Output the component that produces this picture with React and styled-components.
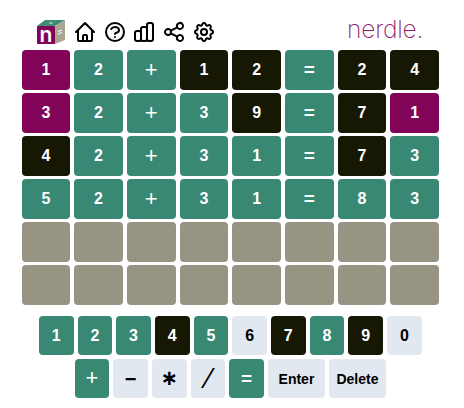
import React from 'react';
import styled, { createGlobalStyle } from 'styled-components';
import {
  HiOutlineHome,
  HiOutlineQuestionMarkCircle,
  HiOutlineChartBar,
  HiOutlineShare,
  HiOutlineCog,
} from 'react-icons/hi';

const colors = {
  purple: '#820458',
  green: '#398874',
  black: '#161803',
  gray: '#989484',
  light: '#e2e8f0',
};

const GlobalStyle = createGlobalStyle`
  html, body {
    margin: 0;
    padding: 0;
    background: #fff;
    font-family: "Liberation Sans", Arial, sans-serif;
  }
`;

const Page = styled.div`
  width: 464px;
  height: 408px;
  overflow: hidden;
  padding: 18px 25px 0 21.5px;
  box-sizing: border-box;
`;

const Header = styled.header`
  display: flex;
  align-items: center;
  justify-content: space-between;
  height: 28px;
  margin-bottom: 4px;
  padding: 0 16px 0 15.5px;
`;

const IconRow = styled.div`
  display: flex;
  align-items: center;
  gap: 4.75px;
`;

const IconButton = styled.button`
  display: flex;
  align-items: center;
  justify-content: center;
  width: 25px;
  height: 28px;
  padding: 0;
  border: 0;
  background: none;
  color: #000;
  font-size: 24px;
`;

const LogoMark = styled.svg`
  margin-right: 1.5px;
`;

const Wordmark = styled.div`
  font-family: Inter, sans-serif;
  font-weight: 200;
  font-size: 24.5px;
  line-height: 28px;
  color: #8f1f6c;
  letter-spacing: -0.2px;
  margin-bottom: 6px;
`;

const Board = styled.div`
  display: grid;
  grid-template-columns: repeat(8, 1fr);
  grid-auto-rows: 40px;
  gap: 3px 4px;
`;

const Cell = styled.div`
  display: flex;
  align-items: center;
  justify-content: center;
  border-radius: 4px;
  background: ${(p) => colors[p.$tone]};
  color: #fff;
  font-weight: 700;
  font-size: 16px;
`;

const Keyboard = styled.div`
  display: flex;
  flex-direction: column;
  align-items: center;
  gap: 4px;
  margin-top: 11px;
`;

const KeyRow = styled.div`
  display: flex;
  gap: 4px;
`;

const Key = styled.button`
  display: flex;
  align-items: center;
  justify-content: center;
  width: ${(p) => (p.$wide ? '57px' : '34.7px')};
  height: 39px;
  padding: 0;
  border: 0;
  border-radius: 4px;
  background: ${(p) => colors[p.$tone]};
  color: ${(p) => (p.$tone === 'light' ? '#000' : '#fff')};
  font-family: inherit;
  font-weight: 700;
  font-size: ${(p) => (p.$wide ? '14px' : '16px')};
`;

const symbolStyles = {
  '+': 'font-size: 22px; font-weight: 400; margin-top: -1px;',
  '=': 'font-size: 19px; font-weight: 700; margin-top: -1px;',
  '−': 'font-size: 20px; font-weight: 700;',
  '∗': 'font-family: "DejaVu Sans", sans-serif; font-size: 21px; font-weight: 700;',
  '⁄': 'font-family: "DejaVu Sans", sans-serif; font-size: 26px; font-weight: 400;',
};

const Symbol = styled.span`
  line-height: 1;
  ${(p) => symbolStyles[p.$char]}
`;

const CubeLogo = () => (
  <LogoMark width="29" height="25" viewBox="0 0 29 25">
    <path d="M0 6L8 0H28L18 6z" fill="#3f8d79" />
    <path d="M18 6L28 0V20L18 24z" fill="#aaa692" />
    <path d="M12 3h4M14 2v2" stroke="#cfe3dc" strokeWidth="0.7" />
    <path d="M21 11.5l4-1.5M21 14l4-1.5" stroke="#fff" strokeWidth="1" />
    <rect x="0" y="6" width="18" height="18" rx="1" fill={colors.purple} />
    <text x="9" y="21.5" textAnchor="middle" fontFamily="Inter, sans-serif" fontWeight="600" fontSize="21" fill="#fff">n</text>
  </LogoMark>
);

const rows = [
  [['1', 'purple'], ['2', 'green'], ['+', 'green'], ['1', 'black'], ['2', 'black'], ['=', 'green'], ['2', 'black'], ['4', 'black']],
  [['3', 'purple'], ['2', 'green'], ['+', 'green'], ['3', 'green'], ['9', 'black'], ['=', 'green'], ['7', 'black'], ['1', 'purple']],
  [['4', 'black'], ['2', 'green'], ['+', 'green'], ['3', 'green'], ['1', 'green'], ['=', 'green'], ['7', 'black'], ['3', 'green']],
  [['5', 'green'], ['2', 'green'], ['+', 'green'], ['3', 'green'], ['1', 'green'], ['=', 'green'], ['8', 'green'], ['3', 'green']],
];

const digits = [
  ['1', 'green'], ['2', 'green'], ['3', 'green'], ['4', 'black'], ['5', 'green'],
  ['6', 'light'], ['7', 'black'], ['8', 'green'], ['9', 'black'], ['0', 'light'],
];

const operators = [
  ['+', 'green'], ['−', 'light'], ['∗', 'light'], ['⁄', 'light'], ['=', 'green'],
];

const App = () => (
  <Page>
    <GlobalStyle />
    <Header>
      <IconRow>
        <CubeLogo />
        <IconButton><HiOutlineHome /></IconButton>
        <IconButton><HiOutlineQuestionMarkCircle /></IconButton>
        <IconButton><HiOutlineChartBar /></IconButton>
        <IconButton><HiOutlineShare /></IconButton>
        <IconButton><HiOutlineCog /></IconButton>
      </IconRow>
      <Wordmark>nerdle.</Wordmark>
    </Header>
    <Board>
      {rows.flat().map(([label, tone], i) => (
        <Cell key={i} $tone={tone}>
          {'+='.includes(label) ? <Symbol $char={label}>{label}</Symbol> : label}
        </Cell>
      ))}
      {Array.from({ length: 16 }).map((_, i) => (
        <Cell key={i} $tone="gray" />
      ))}
    </Board>
    <Keyboard>
      <KeyRow>
        {digits.map(([label, tone]) => (
          <Key key={label} $tone={tone}>{label}</Key>
        ))}
      </KeyRow>
      <KeyRow>
        {operators.map(([label, tone]) => (
          <Key key={label} $tone={tone}><Symbol $char={label}>{label}</Symbol></Key>
        ))}
        <Key $wide $tone="light">Enter</Key>
        <Key $wide $tone="light">Delete</Key>
      </KeyRow>
    </Keyboard>
  </Page>
);

export default App;
